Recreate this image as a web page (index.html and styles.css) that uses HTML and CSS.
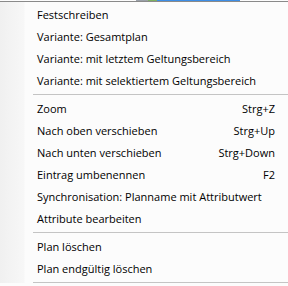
FILE: index.html
```html
<!DOCTYPE html>
<html lang="de">
<head>
    <meta charset="UTF-8">
    <title>Kontextmenü</title>
    <link rel="stylesheet" href="styles.css">
</head>
<body>
    <div class="topbar">
        <span class="strip"></span>
    </div>
    <div class="menu">
        <div class="item"><span>Festschreiben</span></div>
        <div class="item"><span>Variante: Gesamtplan</span></div>
        <div class="item"><span>Variante: mit letztem Geltungsbereich</span></div>
        <div class="item"><span>Variante: mit selektiertem Geltungsbereich</span></div>
        <div class="separator"></div>
        <div class="item"><span>Zoom</span><span class="shortcut">Strg+Z</span></div>
        <div class="item"><span>Nach oben verschieben</span><span class="shortcut">Strg+Up</span></div>
        <div class="item"><span>Nach unten verschieben</span><span class="shortcut">Strg+Down</span></div>
        <div class="item"><span>Eintrag umbenennen</span><span class="shortcut">F2</span></div>
        <div class="item"><span>Synchronisation: Planname mit Attributwert</span></div>
        <div class="item"><span>Attribute bearbeiten</span></div>
        <div class="separator"></div>
        <div class="item"><span>Plan löschen</span></div>
        <div class="item"><span>Plan endgültig löschen</span></div>
        <div class="separator"></div>
    </div>
</body>
</html>
```

FILE: styles.css
```css
body {
    margin: 0;
    padding: 0;
    width: 288px;
    height: 286px;
    overflow: hidden;
    background: #fcfcfc;
    font-family: "Open Sans", "Noto Sans", sans-serif;
    font-size: 11px;
    color: #000;
}
.topbar {
    height: 1px;
    border-bottom: 1px solid #8a8a8a;
    display: flex;
}
.strip {
    margin-left: 136px;
    width: 104px;
    height: 1px;
    background: linear-gradient(to right, #9aa0a8 0, #9aa0a8 12%, #7fb060 12%, #7fb060 20%, #3d8ee6 20%, #3d8ee6 100%);
}
.menu {
    padding-top: 1px;
    background: linear-gradient(to right, #f0f0f0 0, #f7f7f7 24px, #fcfcfc 25px);
}
.item {
    height: 22px;
    display: flex;
    align-items: center;
    justify-content: space-between;
    padding-left: 37px;
    padding-right: 13px;
    white-space: nowrap;
}
.shortcut {
    text-align: right;
}
.separator {
    height: 1px;
    margin: 3px 0 2px 33px;
    background: #c4c4c4;
}
```
